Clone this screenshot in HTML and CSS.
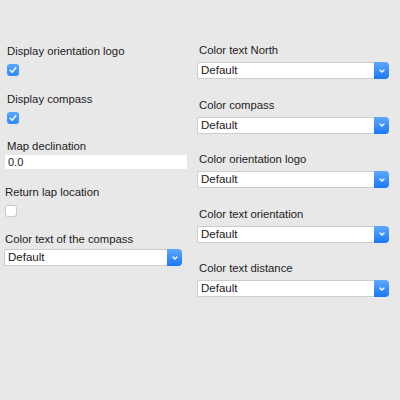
FILE: index.html
```html
<!DOCTYPE html>
<html>
<head>
<meta charset="utf-8">
<link rel="stylesheet" href="styles.css">
</head>
<body>
<div class="page">
  <div class="col left">
    <div class="label indent l1">Display orientation logo</div>
    <span class="cb checked indent cb1"><svg viewBox="0 0 12 12" width="12" height="12"><path d="M3.3 6.3 L5.2 8.3 L8.8 3.6" fill="none" stroke="#fff" stroke-width="1.4" stroke-linecap="round" stroke-linejoin="round"/></svg></span>
    <div class="label indent l2">Display compass</div>
    <span class="cb checked indent cb2"><svg viewBox="0 0 12 12" width="12" height="12"><path d="M3.3 6.3 L5.2 8.3 L8.8 3.6" fill="none" stroke="#fff" stroke-width="1.4" stroke-linecap="round" stroke-linejoin="round"/></svg></span>
    <div class="label indent l3">Map declination</div>
    <div class="input">0.0</div>
    <div class="label l4">Return lap location</div>
    <span class="cb cb3"></span>
    <div class="label l5">Color text of the compass</div>
    <div class="select sel-left"><span class="val">Default</span><span class="btn"><svg viewBox="0 0 8 6" width="8" height="6"><path d="M2 2 L4 4 L6 2" fill="none" stroke="#fff" stroke-width="1.3" stroke-linecap="round" stroke-linejoin="round"/></svg></span></div>
  </div>
  <div class="col right">
    <div class="group first">
      <div class="label">Color text North</div>
      <div class="select"><span class="val">Default</span><span class="btn"><svg viewBox="0 0 8 6" width="8" height="6"><path d="M2 2 L4 4 L6 2" fill="none" stroke="#fff" stroke-width="1.3" stroke-linecap="round" stroke-linejoin="round"/></svg></span></div>
    </div>
    <div class="group">
      <div class="label">Color compass</div>
      <div class="select"><span class="val">Default</span><span class="btn"><svg viewBox="0 0 8 6" width="8" height="6"><path d="M2 2 L4 4 L6 2" fill="none" stroke="#fff" stroke-width="1.3" stroke-linecap="round" stroke-linejoin="round"/></svg></span></div>
    </div>
    <div class="group">
      <div class="label">Color orientation logo</div>
      <div class="select"><span class="val">Default</span><span class="btn"><svg viewBox="0 0 8 6" width="8" height="6"><path d="M2 2 L4 4 L6 2" fill="none" stroke="#fff" stroke-width="1.3" stroke-linecap="round" stroke-linejoin="round"/></svg></span></div>
    </div>
    <div class="group">
      <div class="label">Color text orientation</div>
      <div class="select"><span class="val">Default</span><span class="btn"><svg viewBox="0 0 8 6" width="8" height="6"><path d="M2 2 L4 4 L6 2" fill="none" stroke="#fff" stroke-width="1.3" stroke-linecap="round" stroke-linejoin="round"/></svg></span></div>
    </div>
    <div class="group">
      <div class="label">Color text distance</div>
      <div class="select"><span class="val">Default</span><span class="btn"><svg viewBox="0 0 8 6" width="8" height="6"><path d="M2 2 L4 4 L6 2" fill="none" stroke="#fff" stroke-width="1.3" stroke-linecap="round" stroke-linejoin="round"/></svg></span></div>
    </div>
  </div>
</div>
</body>
</html>
```
FILE: styles.css
```css
html, body {
  margin: 0;
  padding: 0;
  background: #e8e8e8;
  width: 400px;
  height: 400px;
  overflow: hidden;
}
body {
  font-family: "Liberation Sans", Arial, sans-serif;
  font-size: 11px;
  color: #222;
}
.page {
  display: flex;
  gap: 10px;
  padding-left: 4px;
}
.col {
  display: flex;
  flex-direction: column;
  align-items: flex-start;
}
.left {
  width: 183px;
  padding-top: 45px;
}
.right {
  width: 192px;
  padding-top: 44px;
}
.label {
  line-height: 13px;
  height: 13px;
  white-space: nowrap;
  font-size: 11.3px;
}
.indent { margin-left: 3px; }
.cb {
  width: 12px;
  height: 12px;
  box-sizing: border-box;
  border-radius: 3px;
  display: block;
}
.cb svg { display: block; }
.cb.checked {
  background: linear-gradient(#55a8fd, #2e8cf8);
}
.cb3 {
  background: #fff;
  border: 1px solid #c9c9c9;
  margin-left: 1px;
}
.cb1 { margin-top: 6px; }
.l2 { margin-top: 17px; }
.cb2 { margin-top: 6px; }
.l3 { margin-top: 16px; }
.input {
  margin-top: 2px;
  margin-left: 1px;
  width: 182px;
  height: 14px;
  box-sizing: border-box;
  background: #fff;
  line-height: 14px;
  padding-left: 3px;
  font-size: 11px;
}
.l4 { margin-top: 17px; margin-left: 1px; }
.cb3 { margin-top: 6px; }
.l5 { margin-top: 16px; margin-left: 1px; }
.sel-left {
  margin-top: 3px;
  width: 178px !important;
}
.select {
  display: flex;
  width: 192px;
  height: 17px;
  box-sizing: border-box;
  background: #fff;
  border: 1px solid #cdcdcd;
  border-right: none;
  border-radius: 2px 4px 4px 2px;
}
.select .val {
  flex: 1;
  line-height: 15px;
  padding-left: 3px;
  font-size: 11.5px;
  color: #1a1a1a;
}
.select .btn {
  width: 15px;
  height: 17px;
  margin-top: -1px;
  border-radius: 0 4px 4px 0;
  background: linear-gradient(#5ea9fe, #1978f6);
  display: flex;
  align-items: center;
  justify-content: center;
}
.select .btn svg { display: block; }
.group {
  display: flex;
  flex-direction: column;
  align-items: flex-start;
  margin-top: 19.5px;
}
.group.first { margin-top: 0; }
.group .select { margin-top: 5px; }
.group .label { margin-left: 2px; }
```
